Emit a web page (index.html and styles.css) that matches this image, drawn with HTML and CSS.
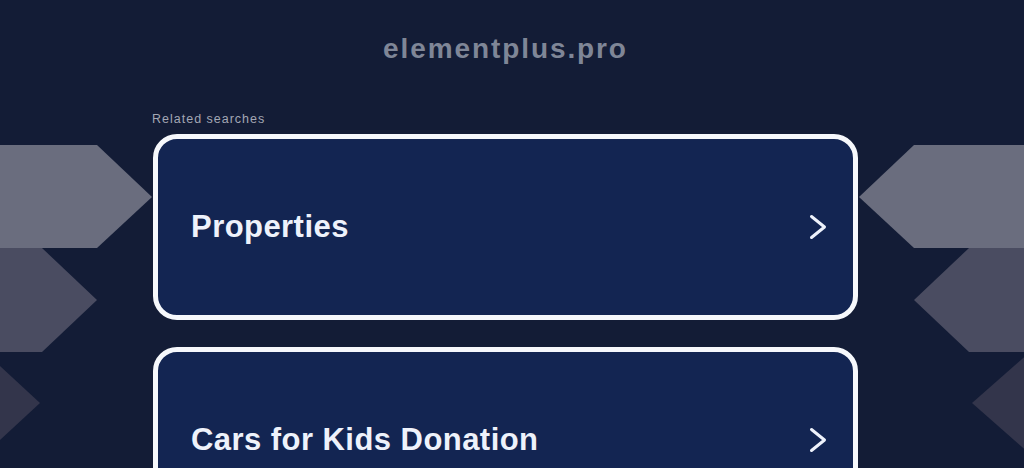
FILE: index.html
```html
<!DOCTYPE html>
<html lang="en">
<head>
<meta charset="utf-8">
<title>elementplus.pro</title>
<link rel="stylesheet" href="styles.css">
</head>
<body>
<svg class="bg" width="1024" height="468" viewBox="0 0 1024 468" aria-hidden="true">
  <polygon class="s1" points="0,145 97,145 152,197 97,248 0,248"/>
  <polygon class="s2" points="0,248 42,248 97,300 42,352 0,352"/>
  <polygon class="s3" points="-15,352 40,403 -15,454"/>
  <polygon class="s1" points="1024,145 914,145 859,197 914,248 1024,248"/>
  <polygon class="s2" points="1024,248 969,248 914,300 969,352 1024,352"/>
  <polygon class="s3" points="1030,352 972,403 1030,454"/>
</svg>
<div class="page">
  <h1 class="domain">elementplus.pro</h1>
  <main class="results">
    <div class="label">Related searches</div>
    <a class="card" href="#">
      <span class="card-text">Properties</span>
      <svg class="chev" width="20" height="28" viewBox="0 0 20 28"><polyline points="3.5,3.5 16.5,14 3.5,24.5"/></svg>
    </a>
    <a class="card" href="#">
      <span class="card-text">Cars for Kids Donation</span>
      <svg class="chev" width="20" height="28" viewBox="0 0 20 28"><polyline points="3.5,3.5 16.5,14 3.5,24.5"/></svg>
    </a>
  </main>
</div>
</body>
</html>
```
FILE: styles.css
```css
html, body {
  margin: 0;
  padding: 0;
}
body {
  background: #131c36;
  height: 468px;
  overflow: hidden;
  position: relative;
  font-family: "Liberation Sans", Arial, sans-serif;
}
.bg {
  position: absolute;
  left: 0;
  top: 0;
  z-index: 0;
}
.s1 { fill: #6a6d7e; }
.s2 { fill: #4a4c61; }
.s3 { fill: #33354b; }

.page {
  position: relative;
  z-index: 1;
  width: 1011px;
  display: flex;
  flex-direction: column;
  align-items: center;
}
.domain {
  margin: 0;
  padding-top: 34px;
  font-size: 28px;
  line-height: 30px;
  font-weight: bold;
  letter-spacing: 1.9px;
  color: #7f8697;
  text-align: center;
}
.results {
  width: 705px;
  margin-top: 47px;
  display: flex;
  flex-direction: column;
}
.label {
  font-size: 12.5px;
  line-height: 16px;
  letter-spacing: 1px;
  color: #a3a7b4;
  margin-left: -1px;
  margin-bottom: 7px;
}
.card {
  box-sizing: border-box;
  height: 186px;
  border: 5px solid #f6f8fc;
  border-radius: 24px;
  background: #132552;
  display: flex;
  align-items: center;
  justify-content: space-between;
  padding: 0 25px 0 33px;
  margin-bottom: 27px;
  text-decoration: none;
}
.card-text {
  color: #eef2fb;
  font-size: 31px;
  font-weight: bold;
  letter-spacing: 0.45px;
}
.chev polyline {
  fill: none;
  stroke: #eef2fb;
  stroke-width: 3;
  stroke-linecap: round;
  stroke-linejoin: round;
}
```
